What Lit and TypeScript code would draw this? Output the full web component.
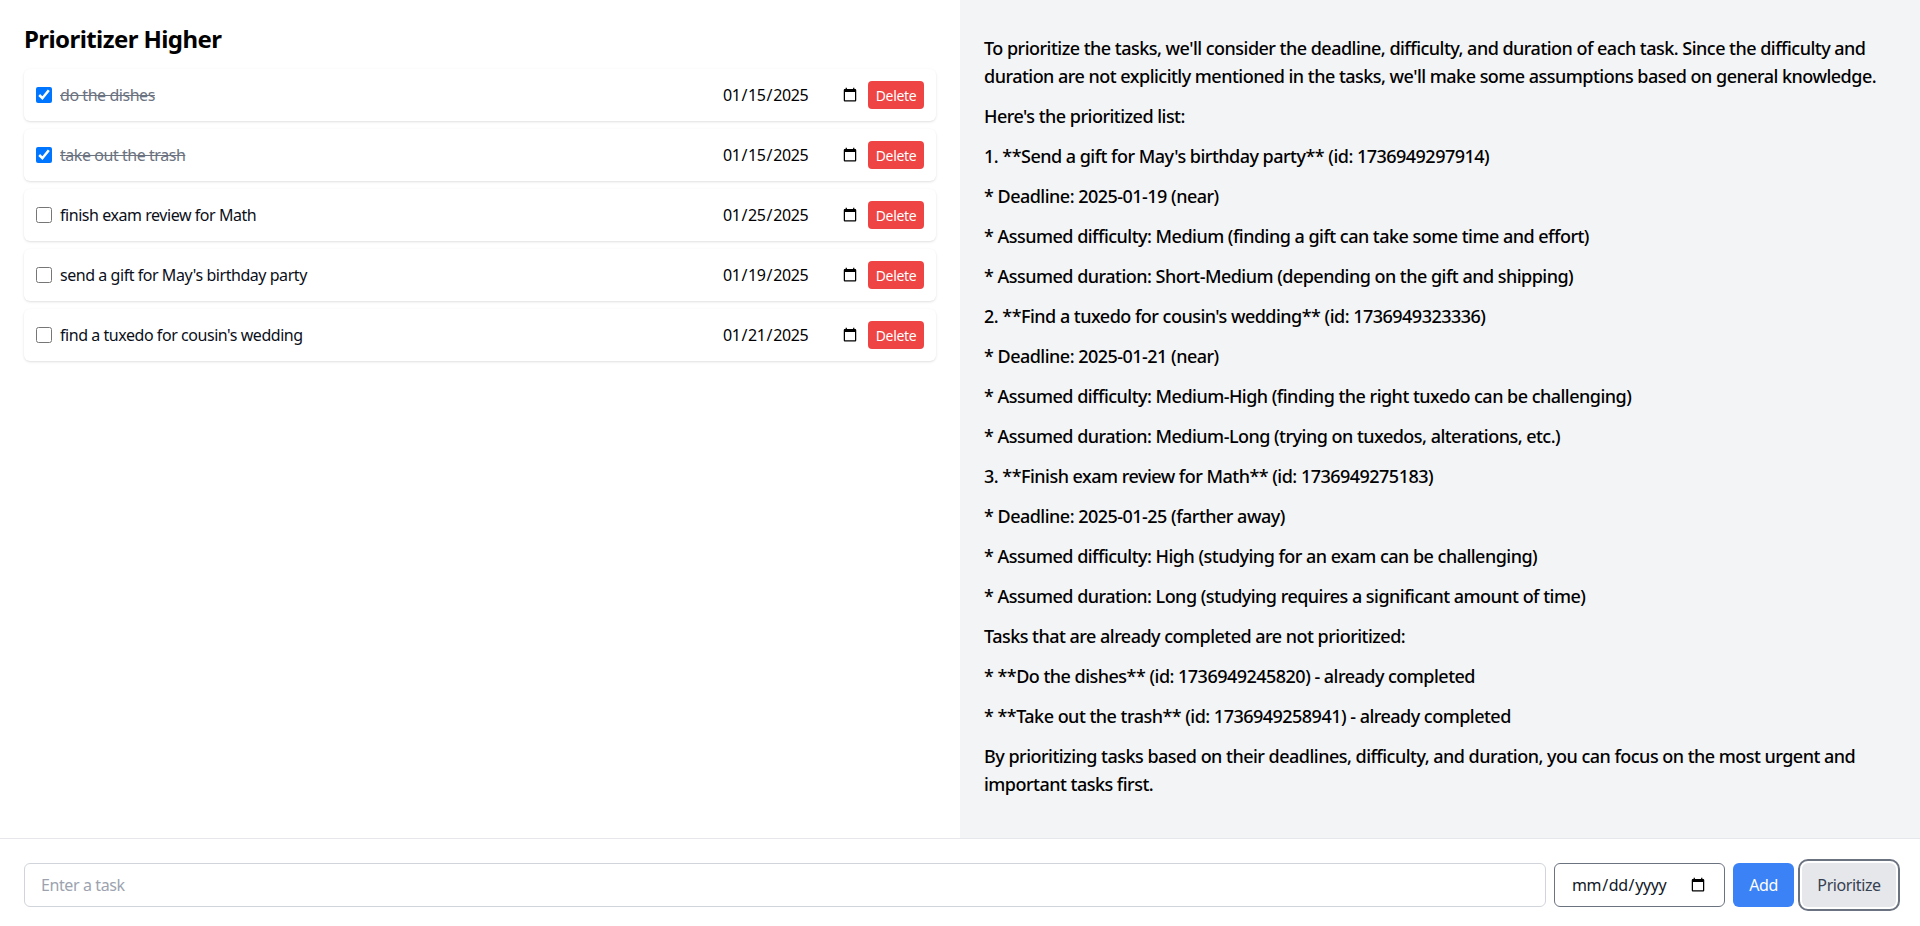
import { LitElement, html, css } from "lit";
import { customElement } from "lit/decorators.js";

const TASKS = [
  { text: "do the dishes", date: "2025-01-15", done: true },
  { text: "take out the trash", date: "2025-01-15", done: true },
  { text: "finish exam review for Math", date: "2025-01-25", done: false },
  { text: "send a gift for May's birthday party", date: "2025-01-19", done: false },
  { text: "find a tuxedo for cousin's wedding", date: "2025-01-21", done: false },
];

const PARAS = [
  "To prioritize the tasks, we'll consider the deadline, difficulty, and duration of each task. Since the difficulty and duration are not explicitly mentioned in the tasks, we'll make some assumptions based on general knowledge.",
  "Here's the prioritized list:",
  "1. **Send a gift for May's birthday party** (id: 1736949297914)",
  "* Deadline: 2025-01-19 (near)",
  "* Assumed difficulty: Medium (finding a gift can take some time and effort)",
  "* Assumed duration: Short-Medium (depending on the gift and shipping)",
  "2. **Find a tuxedo for cousin's wedding** (id: 1736949323336)",
  "* Deadline: 2025-01-21 (near)",
  "* Assumed difficulty: Medium-High (finding the right tuxedo can be challenging)",
  "* Assumed duration: Medium-Long (trying on tuxedos, alterations, etc.)",
  "3. **Finish exam review for Math** (id: 1736949275183)",
  "* Deadline: 2025-01-25 (farther away)",
  "* Assumed difficulty: High (studying for an exam can be challenging)",
  "* Assumed duration: Long (studying requires a significant amount of time)",
  "Tasks that are already completed are not prioritized:",
  "* **Do the dishes** (id: 1736949245820) - already completed",
  "* **Take out the trash** (id: 1736949258941) - already completed",
  "By prioritizing tasks based on their deadlines, difficulty, and duration, you can focus on the most urgent and important tasks first.",
];

@customElement("app-root")
export class AppRoot extends LitElement {
  static styles = css`
    :host {
      display: flex;
      flex-direction: column;
      height: 926px;
      font-family: "Noto Sans", sans-serif;
      font-size: 16px;
      color: #000;
      background: #fff;
      overflow: hidden;
    }
    * { box-sizing: border-box; }
    .main { flex: 1; min-height: 0; display: grid; grid-template-columns: 1fr 1fr; }
    .left { padding: 23px 24px 24px; }
    h1 { margin: 0 0 14px; font-size: 24px; line-height: 32px; font-weight: 700; letter-spacing: -0.58px; }
    .list { display: flex; flex-direction: column; gap: 8px; }
    .row {
      height: 52px;
      display: flex;
      align-items: center;
      gap: 8px;
      padding: 0 12px;
      border-radius: 6px;
      background: #fff;
      box-shadow: 0 1px 3px rgba(0,0,0,.1), 0 1px 2px -1px rgba(0,0,0,.1);
    }
    .row input[type="checkbox"] { width: 16px; height: 16px; margin: 0; flex: none; }
    .label { flex: 1; font-size: 16px; letter-spacing: -0.45px; color: #0b0f1a; }
    .label.done { color: #6b7280; text-decoration: line-through; }
    .row input[type="date"] {
      border: 0; padding: 0; background: transparent; outline: 0;
      font: inherit; font-size: 16px; letter-spacing: -0.4px; color: #000;
    }
    .del {
      width: 56px; height: 28px; border: 0; border-radius: 4px; padding: 0;
      background: #ef4444; color: #fff; font: inherit; font-size: 14px; letter-spacing: -0.35px;
    }
    .right { background: #f3f4f6; padding: 34px 24px 0; }
    .right p { margin: 0 0 12px; font-size: 18px; font-weight: 500; line-height: 28px; letter-spacing: -0.52px; }
    .bar {
      height: 88px; flex: none; display: flex; align-items: flex-start; gap: 8px;
      padding: 24px 24px 0; border-top: 1px solid #e5e7eb;
    }
    .task {
      flex: 1; height: 44px; padding: 0 16px; border: 1px solid #d1d5db; border-radius: 6px;
      font: inherit; font-size: 16px; letter-spacing: -0.4px; outline: 0; background: #fff;
    }
    .task::placeholder { color: #9ca3af; }
    .date {
      width: 171px; height: 44px; padding: 0 16px; border: 1px solid #6b7280; border-radius: 6px;
      font: inherit; font-size: 16px; letter-spacing: -0.4px; color: #111827; background: #fff;
    }
    .add, .pri { height: 44px; border: 0; border-radius: 6px; padding: 0; font: inherit; font-size: 16px; letter-spacing: -0.4px; }
    .add { width: 61px; background: #3b82f6; color: #fff; }
    .pri { width: 94px; background: #e5e7eb; color: #374151; outline: 2px solid #6b7280; outline-offset: 2px; }
  `;

  render() {
    return html`
      <div class="main">
        <section class="left">
          <h1>Prioritizer Higher</h1>
          <div class="list">
            ${TASKS.map(
              (t) => html`<div class="row">
                <input type="checkbox" .checked=${t.done} />
                <span class="label ${t.done ? "done" : ""}">${t.text}</span>
                <input type="date" .value=${t.date} />
                <button class="del">Delete</button>
              </div>`
            )}
          </div>
        </section>
        <section class="right">${PARAS.map((p) => html`<p>${p}</p>`)}</section>
      </div>
      <div class="bar">
        <input class="task" placeholder="Enter a task" />
        <input class="date" type="date" />
        <button class="add">Add</button>
        <button class="pri">Prioritize</button>
      </div>
    `;
  }
}
